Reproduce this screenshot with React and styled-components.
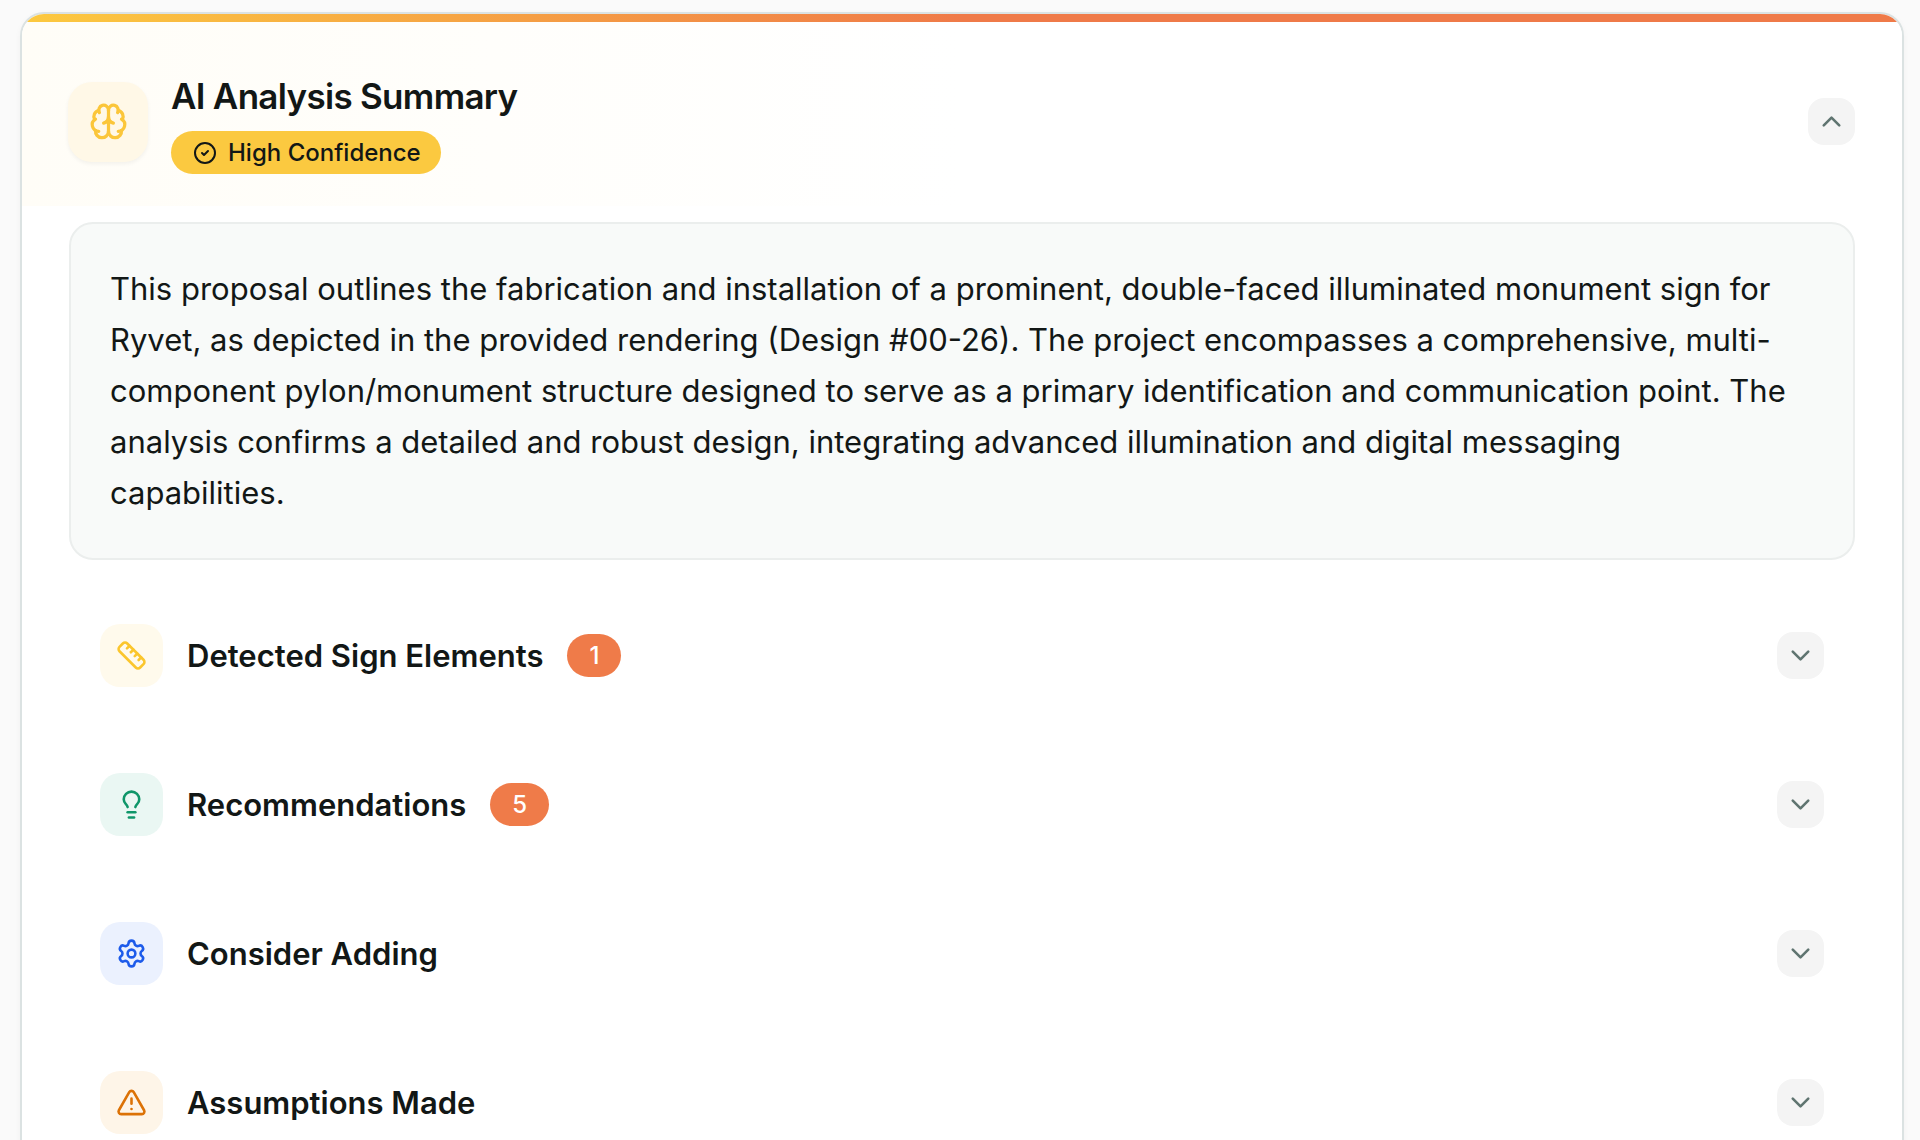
import React, { useState } from "react";
import styled, { createGlobalStyle } from "styled-components";
import {
  Brain,
  ChevronDown,
  ChevronUp,
  CircleCheck,
  Lightbulb,
  Ruler,
  Settings,
  TriangleAlert,
} from "lucide-react";

const GlobalStyle = createGlobalStyle`
  *, *::before, *::after { box-sizing: border-box; }
  body {
    margin: 0;
    background: #fafafa;
    color: #121716;
    font-family: Inter, "Liberation Sans", sans-serif;
    -webkit-font-smoothing: antialiased;
  }
  h2, h3, p, ul { margin: 0; padding: 0; }
  button { font: inherit; border: 0; padding: 0; cursor: pointer; }
`;

const Page = styled.main`
  padding: 12px 16px 32px 20px;
`;

const Card = styled.section`
  overflow: hidden;
  background: #ffffff;
  border: 2px solid #dbe2e2;
  border-radius: 24px;
  box-shadow: 0 2px 6px rgba(0, 0, 0, 0.04);
`;

const AccentBar = styled.div`
  height: 8px;
  background: linear-gradient(90deg, #fcc93f, #ef7a48 50%);
`;

const Header = styled.header`
  display: flex;
  align-items: center;
  gap: 23px;
  padding: 47px 47px 32px 46px;
  background: linear-gradient(90deg, #fffdf7, #ffffff 50%);
`;

const Tile = styled.span`
  display: flex;
  flex: none;
  align-items: center;
  justify-content: center;
  width: ${(p) => (p.$large ? 80 : 63)}px;
  height: ${(p) => (p.$large ? 80 : 63)}px;
  border-radius: ${(p) => (p.$large ? 24 : 20)}px;
  background: ${(p) => p.$background};
  color: ${(p) => p.$color};
  box-shadow: ${(p) => (p.$large ? "0 2px 4px rgba(0, 0, 0, 0.05)" : "none")};
`;

const Heading = styled.div`
  display: flex;
  flex: 1;
  flex-direction: column;
  align-items: flex-start;
  gap: 8px;
`;

const Title = styled.h2`
  font-size: 35px;
  font-weight: 600;
  line-height: 54px;
  letter-spacing: -0.02em;
`;

const Confidence = styled.span`
  display: inline-flex;
  align-items: center;
  gap: 11px;
  padding: 0 20px 0 22px;
  border-radius: 22px;
  background: #fbc940;
  font-size: 24px;
  font-weight: 500;
  line-height: 43px;
`;

const Toggle = styled.button`
  display: flex;
  flex: none;
  align-items: center;
  justify-content: center;
  width: 47px;
  height: 47px;
  border-radius: 16px;
  background: #f4f4f4;
  color: #5f7470;
`;

const Body = styled.div`
  display: flex;
  flex-direction: column;
  gap: 32px;
  padding: 16px 47px 48px;
`;

const Summary = styled.p`
  padding: 39px 56px 40px 39px;
  border: 2px solid #ebeeed;
  border-radius: 24px;
  background: #f8faf9;
  font-size: 31px;
  line-height: 51px;
`;

const Sections = styled.ul`
  display: flex;
  flex-direction: column;
  gap: 22px;
  list-style: none;
`;

const Row = styled.li`
  display: flex;
  align-items: center;
  gap: 24px;
  padding: 32px 31px;
`;

const RowTitle = styled.h3`
  font-size: 31px;
  font-weight: 600;
  line-height: 48px;
`;

const Count = styled.span`
  padding: 0 22px;
  border-radius: 22px;
  background: #ef7b49;
  color: #ffffff;
  font-size: 24px;
  font-weight: 500;
  line-height: 43px;
`;

const Spacer = styled.span`
  flex: 1;
`;

const sections = [
  { title: "Detected Sign Elements", count: 1, icon: Ruler, color: "#fbc62d", background: "#fffaec" },
  { title: "Recommendations", count: 5, icon: Lightbulb, color: "#0f9669", background: "#eaf7f3" },
  { title: "Consider Adding", icon: Settings, color: "#1d5bea", background: "#ebf1fe" },
  { title: "Assumptions Made", icon: TriangleAlert, color: "#dc7206", background: "#fef5e8" },
];

export default function App() {
  const [open, setOpen] = useState(true);
  const Chevron = open ? ChevronUp : ChevronDown;

  return (
    <>
      <GlobalStyle />
      <Page>
        <Card>
          <AccentBar />
          <Header>
            <Tile $large $background="#fff8e7" $color="#fbc63a">
              <Brain size={39} />
            </Tile>
            <Heading>
              <Title>AI Analysis Summary</Title>
              <Confidence>
                <CircleCheck size={24} />
                High Confidence
              </Confidence>
            </Heading>
            <Toggle type="button" aria-label="Toggle summary" aria-expanded={open} onClick={() => setOpen(!open)}>
              <Chevron size={31} />
            </Toggle>
          </Header>
          {open && (
            <Body>
              <Summary>
                This proposal outlines the fabrication and installation of a prominent, double-faced illuminated
                monument sign for Ryvet, as depicted in the provided rendering (Design #00-26). The project
                encompasses a comprehensive, multi-component pylon/monument structure designed to serve as a primary
                identification and communication point. The analysis confirms a detailed and robust design,
                integrating advanced illumination and digital messaging capabilities.
              </Summary>
              <Sections>
                {sections.map(({ title, count, icon: Icon, color, background }) => (
                  <Row key={title}>
                    <Tile $background={background} $color={color}>
                      <Icon size={31} />
                    </Tile>
                    <RowTitle>{title}</RowTitle>
                    {count && <Count>{count}</Count>}
                    <Spacer />
                    <Toggle type="button" aria-label={`Expand ${title}`} aria-expanded={false}>
                      <ChevronDown size={31} />
                    </Toggle>
                  </Row>
                ))}
              </Sections>
            </Body>
          )}
        </Card>
      </Page>
    </>
  );
}
